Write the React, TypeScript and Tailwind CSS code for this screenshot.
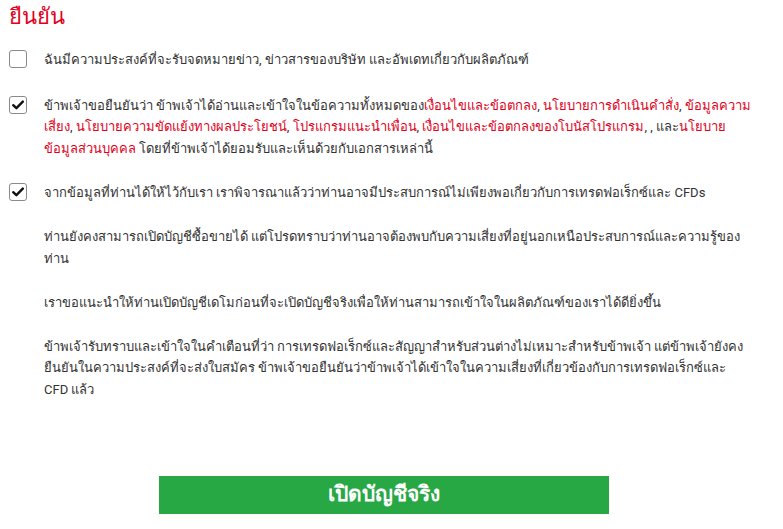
import { useState } from "react"

const red = "text-[#e0001b]"

function Box({ checked, onClick }: { checked: boolean; onClick: () => void }) {
    return (
        <button
            type="button"
            onClick={onClick}
            className="mt-[1px] flex h-[18px] w-[18px] shrink-0 items-center justify-center rounded-[3px] border border-[#8a8a8a] bg-white"
        >
            {checked && (
                <svg viewBox="0 0 12 10" className="h-[10px] w-[12px]">
                    <path d="M1.2 5.2 4.4 8.2 10.8 1.6" fill="none" stroke="#111" strokeWidth="2.4" strokeLinecap="round" strokeLinejoin="round" />
                </svg>
            )}
        </button>
    )
}

export default function App() {
    const [news, setNews] = useState(false)
    const [agree, setAgree] = useState(true)
    const [risk, setRisk] = useState(true)

    return (
        <div className="min-h-[529px] w-[783px] bg-white pl-[9px] pr-[25px] pt-[2px] font-['Roboto','Noto_Sans',sans-serif] text-[13px] leading-[21.5px] text-[#333]">
            <h2 className={`text-[22px] font-medium leading-[30px] ${red}`}>ยืนยัน</h2>

            {/* newsletter */}
            <div className="mt-[17px] flex gap-[17px]">
                <Box checked={news} onClick={() => setNews(!news)} />
                <p>ฉันมีความประสงค์ที่จะรับจดหมายข่าว, ข่าวสารของบริษัท และอัพเดทเกี่ยวกับผลิตภัณฑ์</p>
            </div>

            {/* terms */}
            <div className="mt-[24px] flex gap-[17px]">
                <Box checked={agree} onClick={() => setAgree(!agree)} />
                <p>
                    ข้าพเจ้าขอยืนยันว่า ข้าพเจ้าได้อ่านและเข้าใจในข้อความทั้งหมดของ
                    <span className={red}>เงื่อนไขและข้อตกลง</span>, <span className={red}>นโยบายการดำเนินคำสั่ง</span>,{" "}
                    <span className={red}>ข้อมูลความเสี่ยง</span>, <span className={red}>นโยบายความขัดแย้งทางผลประโยชน์</span>,{" "}
                    <span className={red}>โปรแกรมแนะนำเพื่อน</span>, <span className={red}>เงื่อนไขและข้อตกลงของโบนัสโปรแกรม</span>, , และ
                    <span className={red}>นโยบายข้อมูลส่วนบุคคล</span> โดยที่ข้าพเจ้าได้ยอมรับและเห็นด้วยกับเอกสารเหล่านี้
                </p>
            </div>

            {/* experience warning */}
            <div className="mt-[23px] flex gap-[17px]">
                <Box checked={risk} onClick={() => setRisk(!risk)} />
                <div className="flex min-w-0 flex-col gap-[22.5px]">
                    <p>จากข้อมูลที่ท่านได้ให้ไว้กับเรา เราพิจารณาแล้วว่าท่านอาจมีประสบการณ์ไม่เพียงพอเกี่ยวกับการเทรดฟอเร็กซ์และ CFDs</p>
                    <p>ท่านยังคงสามารถเปิดบัญชีซื้อขายได้ แต่โปรดทราบว่าท่านอาจต้องพบกับความเสี่ยงที่อยู่นอกเหนือประสบการณ์และความรู้ของท่าน</p>
                    <p>เราขอแนะนำให้ท่านเปิดบัญชีเดโมก่อนที่จะเปิดบัญชีจริงเพื่อให้ท่านสามารถเข้าใจในผลิตภัณฑ์ของเราได้ดียิ่งขึ้น</p>
                    <p>
                        ข้าพเจ้ารับทราบและเข้าใจในคำเตือนที่ว่า การเทรดฟอเร็กซ์และสัญญาสำหรับส่วนต่างไม่เหมาะสำหรับข้าพเจ้า แต่ข้าพเจ้ายังคงยืนยันในความประสงค์ที่จะส่งใบสมัคร
                        ข้าพเจ้าขอยืนยันว่าข้าพเจ้าได้เข้าใจในความเสี่ยงที่เกี่ยวข้องกับการเทรดฟอเร็กซ์และ{" "}
                        <span className="whitespace-nowrap">CFD แล้ว</span>
                    </p>
                </div>
            </div>

            {/* submit */}
            <div className="mt-[76px] flex justify-center">
                <button className="h-[38px] w-[450px] bg-[#28a745] text-[21px] font-bold text-white">เปิดบัญชีจริง</button>
            </div>
        </div>
    )
}
